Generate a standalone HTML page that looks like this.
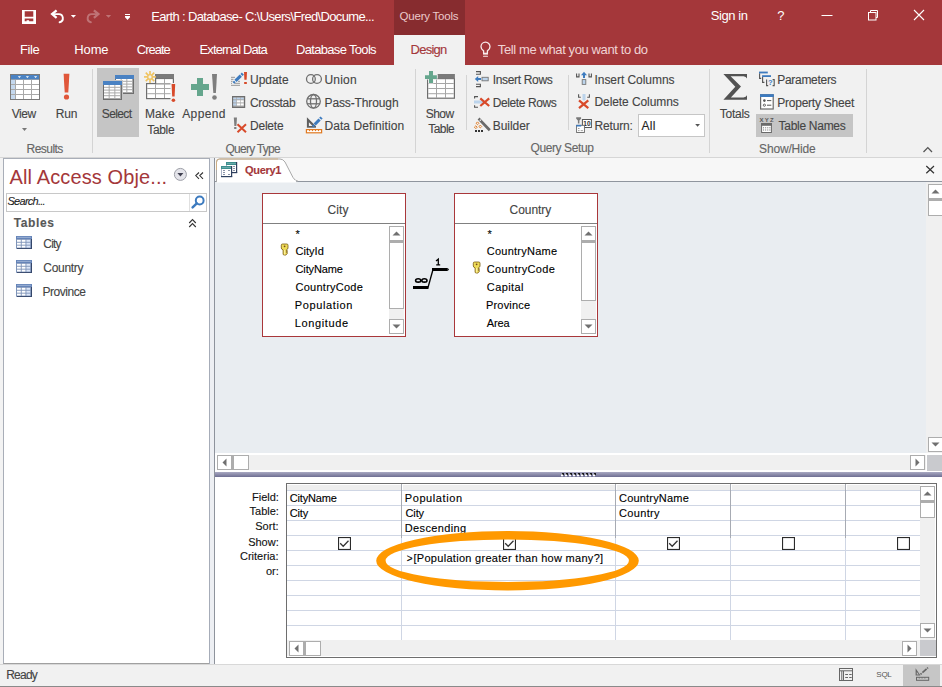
<!DOCTYPE html>
<html><head><meta charset="utf-8"><style>
html,body{margin:0;padding:0;width:942px;height:687px;overflow:hidden;background:#F1F1F1;}
.t{position:absolute;white-space:nowrap;font-family:"Liberation Sans",sans-serif;-webkit-text-stroke:0.12px currentColor;}
.r{position:absolute;}
svg.r{overflow:visible}
</style></head><body>
<div class="r" style="left:0px;top:0px;width:942px;height:65px;background:#A4373A;"></div>
<div class="r" style="left:394px;top:0px;width:71px;height:35px;background:#872C2F;"></div>
<div class="r" style="left:394px;top:35px;width:71px;height:30px;background:#F1F1F1;"></div>
<div class="r" style="left:0px;top:65px;width:942px;height:92px;background:#F1F1F1;"></div>
<div class="r" style="left:0px;top:157px;width:942px;height:1px;background:#D6D6D6;"></div>
<div class="r" style="left:0px;top:158px;width:942px;height:506px;background:#F3F3F3;"></div>
<div class="r" style="left:3px;top:158px;width:207px;height:506px;background:#FFFFFF;box-sizing:border-box;border:1px solid #A9AEB8;border-bottom-color:#A0A0A0"></div>
<div class="r" style="left:209px;top:158px;width:6px;height:506px;background:#EDEFF3;box-sizing:border-box;border-left:1px solid #A6ACB8;border-right:1px solid #8E939C"></div>
<div class="r" style="left:215px;top:158px;width:727px;height:23px;background:#F7F7F7;"></div>
<div class="r" style="left:215px;top:181px;width:727px;height:1px;background:#8F959E;"></div>
<div class="r" style="left:215px;top:182px;width:711px;height:271px;background:#E9EDF1;"></div>
<div class="r" style="left:926px;top:182px;width:16px;height:271px;background:#F0F0F0;"></div>
<div class="r" style="left:215px;top:453px;width:727px;height:19px;background:#FFFFFF;"></div>
<div class="r" style="left:217px;top:455px;width:709px;height:15px;background:#F0F0F0;"></div>
<div class="r" style="left:927px;top:455px;width:15px;height:16px;background:#C9CACE;"></div>
<div class="r" style="left:215px;top:472px;width:727px;height:5px;background:linear-gradient(#A9A9C2,#6F6F93);"></div>
<div class="r" style="left:215px;top:477px;width:727px;height:187px;background:#FFFFFF;"></div>
<svg class="r" style="left:0;top:0" width="942" height="687"><rect x="562" y="473" width="2" height="2" fill="#1A1A1A"/><rect x="561" y="474.5" width="2" height="1.8" fill="#FFFFFF"/><rect x="566" y="473" width="2" height="2" fill="#1A1A1A"/><rect x="565" y="474.5" width="2" height="1.8" fill="#FFFFFF"/><rect x="570" y="473" width="2" height="2" fill="#1A1A1A"/><rect x="569" y="474.5" width="2" height="1.8" fill="#FFFFFF"/><rect x="574" y="473" width="2" height="2" fill="#1A1A1A"/><rect x="573" y="474.5" width="2" height="1.8" fill="#FFFFFF"/><rect x="578" y="473" width="2" height="2" fill="#1A1A1A"/><rect x="577" y="474.5" width="2" height="1.8" fill="#FFFFFF"/><rect x="582" y="473" width="2" height="2" fill="#1A1A1A"/><rect x="581" y="474.5" width="2" height="1.8" fill="#FFFFFF"/><rect x="586" y="473" width="2" height="2" fill="#1A1A1A"/><rect x="585" y="474.5" width="2" height="1.8" fill="#FFFFFF"/><rect x="590" y="473" width="2" height="2" fill="#1A1A1A"/><rect x="589" y="474.5" width="2" height="1.8" fill="#FFFFFF"/><rect x="594" y="473" width="2" height="2" fill="#1A1A1A"/><rect x="593" y="474.5" width="2" height="1.8" fill="#FFFFFF"/></svg>
<div class="r" style="left:0px;top:664px;width:942px;height:1px;background:#D8D8D8;"></div>
<div class="r" style="left:0px;top:665px;width:942px;height:21px;background:#F1F1F1;"></div>
<div class="r" style="left:0px;top:686px;width:942px;height:1px;background:#8A8A8A;"></div>
<div class="r" style="left:903px;top:665px;width:37px;height:21px;background:#C6C6C6;"></div>
<div class="r" style="left:97px;top:68px;width:42px;height:69px;background:#C5C5C5;"></div>
<div class="r" style="left:756px;top:114px;width:97px;height:23px;background:#C5C5C5;"></div>
<div class="r" style="left:638px;top:114px;width:67px;height:23px;background:#FFFFFF;box-sizing:border-box;border:1px solid #C6C6C6"></div>
<div class="r" style="left:92px;top:69px;width:1px;height:84px;background:#D4D4D4;"></div>
<div class="r" style="left:415px;top:69px;width:1px;height:84px;background:#D4D4D4;"></div>
<div class="r" style="left:709px;top:69px;width:1px;height:84px;background:#D4D4D4;"></div>
<div class="r" style="left:866px;top:69px;width:1px;height:84px;background:#D4D4D4;"></div>
<div class="r" style="left:466px;top:75px;width:1px;height:55px;background:#D4D4D4;"></div>
<div class="r" style="left:568px;top:75px;width:1px;height:55px;background:#D4D4D4;"></div>
<div class="r" style="left:6px;top:193px;width:201px;height:19px;background:#FFFFFF;box-sizing:border-box;border:1px solid #C8C8C8"></div>
<div class="r" style="left:189px;top:194px;width:1px;height:17px;background:#E0E0E0;"></div>
<div class="r" style="left:262px;top:193px;width:144px;height:144px;background:#FFFFFF;box-sizing:border-box;border:1px solid #A9373A"></div>
<div class="r" style="left:263px;top:223px;width:142px;height:1px;background:#808080;"></div>
<div class="r" style="left:389px;top:226px;width:15px;height:15px;background:#FFFFFF;box-sizing:border-box;border:1px solid #ADADAD"></div>
<div class="r" style="left:389px;top:241px;width:15px;height:68px;background:#FFFFFF;box-sizing:border-box;border:1px solid #ADADAD;border-top-width:2px"></div>
<div class="r" style="left:389px;top:309px;width:15px;height:10px;background:#F0F0F0;"></div>
<div class="r" style="left:389px;top:319px;width:15px;height:15px;background:#FFFFFF;box-sizing:border-box;border:1px solid #ADADAD"></div>
<svg class="r" style="left:389px;top:226px" width="15" height="15"><path d="M3.5 9.5 L7.5 5.5 L11.5 9.5Z" fill="#707070"/></svg>
<svg class="r" style="left:389px;top:319px" width="15" height="15"><path d="M3.5 5.5 L7.5 9.5 L11.5 5.5Z" fill="#707070"/></svg>
<div class="r" style="left:454px;top:193px;width:144px;height:144px;background:#FFFFFF;box-sizing:border-box;border:1px solid #A9373A"></div>
<div class="r" style="left:455px;top:223px;width:142px;height:1px;background:#808080;"></div>
<div class="r" style="left:581px;top:226px;width:15px;height:15px;background:#FFFFFF;box-sizing:border-box;border:1px solid #ADADAD"></div>
<div class="r" style="left:581px;top:241px;width:15px;height:60px;background:#FFFFFF;box-sizing:border-box;border:1px solid #ADADAD;border-top-width:2px"></div>
<div class="r" style="left:581px;top:301px;width:15px;height:18px;background:#F0F0F0;"></div>
<div class="r" style="left:581px;top:319px;width:15px;height:15px;background:#FFFFFF;box-sizing:border-box;border:1px solid #ADADAD"></div>
<svg class="r" style="left:581px;top:226px" width="15" height="15"><path d="M3.5 9.5 L7.5 5.5 L11.5 9.5Z" fill="#707070"/></svg>
<svg class="r" style="left:581px;top:319px" width="15" height="15"><path d="M3.5 5.5 L7.5 9.5 L11.5 5.5Z" fill="#707070"/></svg>
<div class="r" style="left:286px;top:483px;width:651px;height:175px;background:#FFFFFF;box-sizing:border-box;border:1px solid #6E6E6E"></div>
<div class="r" style="left:287px;top:485px;width:114px;height:5px;background:#EEEEEE;"></div>
<div class="r" style="left:403px;top:485px;width:212px;height:5px;background:#EEEEEE;"></div>
<div class="r" style="left:617px;top:485px;width:113px;height:5px;background:#EEEEEE;"></div>
<div class="r" style="left:732px;top:485px;width:113px;height:5px;background:#EEEEEE;"></div>
<div class="r" style="left:847px;top:485px;width:73px;height:5px;background:#EEEEEE;"></div>
<div class="r" style="left:287px;top:490px;width:633px;height:1px;background:#CFD6E4;"></div>
<div class="r" style="left:287px;top:505px;width:633px;height:1px;background:#CFD6E4;"></div>
<div class="r" style="left:287px;top:520px;width:633px;height:1px;background:#CFD6E4;"></div>
<div class="r" style="left:287px;top:535px;width:633px;height:1px;background:#CFD6E4;"></div>
<div class="r" style="left:287px;top:550px;width:633px;height:1px;background:#CFD6E4;"></div>
<div class="r" style="left:287px;top:565px;width:633px;height:1px;background:#CFD6E4;"></div>
<div class="r" style="left:287px;top:580px;width:633px;height:1px;background:#CFD6E4;"></div>
<div class="r" style="left:287px;top:595px;width:633px;height:1px;background:#CFD6E4;"></div>
<div class="r" style="left:287px;top:610px;width:633px;height:1px;background:#CFD6E4;"></div>
<div class="r" style="left:287px;top:625px;width:633px;height:1px;background:#CFD6E4;"></div>
<div class="r" style="left:401px;top:484px;width:1px;height:54px;background:#A7ABB3;"></div>
<div class="r" style="left:401px;top:538px;width:1px;height:102px;background:#CFD6E4;"></div>
<div class="r" style="left:615px;top:484px;width:1px;height:54px;background:#A7ABB3;"></div>
<div class="r" style="left:615px;top:538px;width:1px;height:102px;background:#CFD6E4;"></div>
<div class="r" style="left:730px;top:484px;width:1px;height:54px;background:#A7ABB3;"></div>
<div class="r" style="left:730px;top:538px;width:1px;height:102px;background:#CFD6E4;"></div>
<div class="r" style="left:845px;top:484px;width:1px;height:54px;background:#A7ABB3;"></div>
<div class="r" style="left:845px;top:538px;width:1px;height:102px;background:#CFD6E4;"></div>
<svg class="r" style="left:338px;top:537px" width="13" height="13"><rect x="0.55" y="0.55" width="11.9" height="11.9" fill="#fff" stroke="#2B2B2B" stroke-width="1.1"/><path d="M2.2 6.2 L5.2 9.3 L10.5 3.7" fill="none" stroke="#333" stroke-width="1.25"/></svg>
<svg class="r" style="left:503px;top:537px" width="13" height="13"><rect x="0.55" y="0.55" width="11.9" height="11.9" fill="#fff" stroke="#2B2B2B" stroke-width="1.1"/><path d="M2.2 6.2 L5.2 9.3 L10.5 3.7" fill="none" stroke="#333" stroke-width="1.25"/></svg>
<svg class="r" style="left:667px;top:537px" width="13" height="13"><rect x="0.55" y="0.55" width="11.9" height="11.9" fill="#fff" stroke="#2B2B2B" stroke-width="1.1"/><path d="M2.2 6.2 L5.2 9.3 L10.5 3.7" fill="none" stroke="#333" stroke-width="1.25"/></svg>
<svg class="r" style="left:782px;top:537px" width="13" height="13"><rect x="0.55" y="0.55" width="11.9" height="11.9" fill="#fff" stroke="#2B2B2B" stroke-width="1.1"/></svg>
<svg class="r" style="left:897px;top:537px" width="13" height="13"><rect x="0.55" y="0.55" width="11.9" height="11.9" fill="#fff" stroke="#2B2B2B" stroke-width="1.1"/></svg>
<div class="r" style="left:920px;top:486px;width:15px;height:154px;background:#F0F0F0;"></div>
<div class="r" style="left:920px;top:486px;width:15px;height:15px;background:#FFFFFF;box-sizing:border-box;border:1px solid #ADADAD"></div>
<div class="r" style="left:920px;top:501px;width:15px;height:17px;background:#FFFFFF;box-sizing:border-box;border:1px solid #ADADAD;border-top-width:2px"></div>
<div class="r" style="left:920px;top:623px;width:15px;height:15px;background:#FFFFFF;box-sizing:border-box;border:1px solid #ADADAD"></div>
<svg class="r" style="left:920px;top:486px" width="15" height="15"><path d="M3.5 9.5 L7.5 5.5 L11.5 9.5Z" fill="#707070"/></svg>
<svg class="r" style="left:920px;top:623px" width="15" height="15"><path d="M3.5 5.5 L7.5 9.5 L11.5 5.5Z" fill="#707070"/></svg>
<div class="r" style="left:287px;top:640px;width:633px;height:16px;background:#F0F0F0;"></div>
<div class="r" style="left:920px;top:640px;width:16px;height:16px;background:#C9CACE;"></div>
<div class="r" style="left:289px;top:641px;width:15px;height:15px;background:#FFFFFF;box-sizing:border-box;border:1px solid #ADADAD"></div>
<div class="r" style="left:304px;top:641px;width:17px;height:15px;background:#FFFFFF;box-sizing:border-box;border:1px solid #ADADAD;border-left-width:2px"></div>
<div class="r" style="left:902px;top:641px;width:15px;height:15px;background:#FFFFFF;box-sizing:border-box;border:1px solid #ADADAD"></div>
<svg class="r" style="left:289px;top:641px" width="15" height="15"><path d="M9.5 3.5 L5.5 7.5 L9.5 11.5Z" fill="#707070"/></svg>
<svg class="r" style="left:902px;top:641px" width="15" height="15"><path d="M5.5 3.5 L9.5 7.5 L5.5 11.5Z" fill="#707070"/></svg>
<div class="r" style="left:217px;top:455px;width:15px;height:15px;background:#FFFFFF;box-sizing:border-box;border:1px solid #ADADAD"></div>
<div class="r" style="left:232px;top:455px;width:17px;height:15px;background:#FFFFFF;box-sizing:border-box;border:1px solid #ADADAD;border-left-width:2px"></div>
<div class="r" style="left:910px;top:455px;width:15px;height:15px;background:#FFFFFF;box-sizing:border-box;border:1px solid #ADADAD"></div>
<svg class="r" style="left:217px;top:455px" width="15" height="15"><path d="M9.5 3.5 L5.5 7.5 L9.5 11.5Z" fill="#707070"/></svg>
<svg class="r" style="left:910px;top:455px" width="15" height="15"><path d="M5.5 3.5 L9.5 7.5 L5.5 11.5Z" fill="#707070"/></svg>
<div class="r" style="left:928px;top:184px;width:14px;height:15px;background:#FFFFFF;box-sizing:border-box;border:1px solid #ADADAD;border-right:none"></div>
<div class="r" style="left:928px;top:199px;width:14px;height:17px;background:#FFFFFF;box-sizing:border-box;border:1px solid #ADADAD;border-top-width:2px;border-right:none"></div>
<div class="r" style="left:928px;top:437px;width:14px;height:15px;background:#FFFFFF;box-sizing:border-box;border:1px solid #ADADAD;border-right:none"></div>
<svg class="r" style="left:928px;top:184px" width="15" height="15"><path d="M3.5 9.5 L7.5 5.5 L11.5 9.5Z" fill="#707070"/></svg>
<svg class="r" style="left:928px;top:437px" width="15" height="15"><path d="M3.5 5.5 L7.5 9.5 L11.5 5.5Z" fill="#707070"/></svg>
<svg class="r" style="left:0;top:0" width="942" height="687" viewBox="0 0 942 687"><path d="M22 10h14v14h-14z M24.7 11.3h8.6v5.5h-8.6z M24.7 18.4h8.6v2.9h-4.2v-1h-2.5v1h-1.9z" fill="#FFFFFF" fill-rule="evenodd"/><path d="M56.6 10.3 L52.1 14.1 L56.6 17.9" fill="none" stroke="#FFFFFF" stroke-width="2.3"/><path d="M52.8 14.1 H58.5 A4.1 4.1 0 0 1 59.6 22.2" fill="none" stroke="#FFFFFF" stroke-width="1.9" stroke-linecap="round"/><path d="M70.8 15 H76 L73.4 17.8Z" fill="#FFFFFF"/><g opacity="0.3" transform="matrix(-1,0,0,1,150.5,0)"><path d="M56.6 10.3 L52.1 14.1 L56.6 17.9" fill="none" stroke="#FFFFFF" stroke-width="2.3"/><path d="M52.8 14.1 H58.5 A4.1 4.1 0 0 1 59.6 22.2" fill="none" stroke="#FFFFFF" stroke-width="1.9" stroke-linecap="round"/></g><path d="M105.8 15 H111.2 L108.5 17.8Z" fill="#FFFFFF" opacity="0.3"/><rect x="125" y="14" width="5" height="1" fill="#fff"/><rect x="125" y="16" width="5" height="1" fill="#fff"/><path d="M124.8 17 H130.2 L127.5 20Z" fill="#fff"/><rect x="821.5" y="15" width="11" height="1" fill="#fff"/><rect x="868.5" y="12.5" width="7.5" height="7.5" fill="none" stroke="#fff" stroke-width="1"/><path d="M870.5 12.5 V10.5 H877.5 V17.5 H876" fill="none" stroke="#fff" stroke-width="1"/><path d="M914 10 L924 20 M924 10 L914 20" stroke="#fff" stroke-width="1.1"/><g transform="translate(0,0.7)"><path d="M483.6 52.3 V50.2 C481.9 49 481 47.6 481 46 A4.5 4.5 0 0 1 490 46 C490 47.6 489.1 49 487.4 50.2 V52.3" fill="none" stroke="#F8ECEC" stroke-width="1.3"/><rect x="483" y="52" width="5" height="1.9" fill="#F8ECEC"/><rect x="483" y="55" width="5" height="1.1" rx="0.5" fill="#F8ECEC"/></g><rect x="10" y="74" width="30" height="26" fill="#A9A9A9"/><rect x="10.5" y="74.5" width="29" height="25" fill="none" stroke="#7A7A7A" stroke-width="1"/><rect x="11" y="75" width="28" height="4.3" fill="#4A82C3"/><path d="M17.799999999999997 76.2 H21.0 L19.4 78Z" fill="#fff"/><path d="M25.799999999999997 76.2 H29.0 L27.4 78Z" fill="#fff"/><path d="M34.0 76.2 H37.2 L35.6 78Z" fill="#fff"/><rect x="11" y="80" width="4" height="4" fill="#C4D8EE"/><rect x="16" y="80" width="7" height="4" fill="#FFFFFF"/><rect x="24" y="80" width="7" height="4" fill="#FFFFFF"/><rect x="32" y="80" width="7" height="4" fill="#FFFFFF"/><rect x="11" y="85" width="4" height="4" fill="#C4D8EE"/><rect x="16" y="85" width="7" height="4" fill="#FFFFFF"/><rect x="24" y="85" width="7" height="4" fill="#FFFFFF"/><rect x="32" y="85" width="7" height="4" fill="#FFFFFF"/><rect x="11" y="90" width="4" height="4" fill="#C4D8EE"/><rect x="16" y="90" width="7" height="4" fill="#FFFFFF"/><rect x="24" y="90" width="7" height="4" fill="#FFFFFF"/><rect x="32" y="90" width="7" height="4" fill="#FFFFFF"/><rect x="11" y="95" width="4" height="4" fill="#C4D8EE"/><rect x="16" y="95" width="7" height="4" fill="#FFFFFF"/><rect x="24" y="95" width="7" height="4" fill="#FFFFFF"/><rect x="32" y="95" width="7" height="4" fill="#FFFFFF"/><path d="M22 128 H27 L24.5 131Z" fill="#777"/><path d="M63.6 73.7 H69.4 L68.3 92.5 H64.7Z" fill="#E0573A"/><circle cx="66.5" cy="97" r="2.6" fill="#E0573A"/><rect x="115" y="75" width="19" height="19" fill="#6E6E6E"/><rect x="115" y="75" width="19" height="4" fill="#4A82C3"/><rect x="116" y="79" width="17" height="14" fill="#A9A9A9"/><rect x="116.00" y="79.00" width="4.67" height="1.80" fill="#fff"/><rect x="116.00" y="81.80" width="4.67" height="1.80" fill="#fff"/><rect x="116.00" y="84.60" width="4.67" height="1.80" fill="#fff"/><rect x="116.00" y="87.40" width="4.67" height="1.80" fill="#fff"/><rect x="116.00" y="90.20" width="4.67" height="1.80" fill="#fff"/><rect x="121.67" y="79.00" width="4.67" height="1.80" fill="#fff"/><rect x="121.67" y="81.80" width="4.67" height="1.80" fill="#fff"/><rect x="121.67" y="84.60" width="4.67" height="1.80" fill="#fff"/><rect x="121.67" y="87.40" width="4.67" height="1.80" fill="#fff"/><rect x="121.67" y="90.20" width="4.67" height="1.80" fill="#fff"/><rect x="127.33" y="79.00" width="4.67" height="1.80" fill="#fff"/><rect x="127.33" y="81.80" width="4.67" height="1.80" fill="#fff"/><rect x="127.33" y="84.60" width="4.67" height="1.80" fill="#fff"/><rect x="127.33" y="87.40" width="4.67" height="1.80" fill="#fff"/><rect x="127.33" y="90.20" width="4.67" height="1.80" fill="#fff"/><rect x="102" y="80" width="21" height="21" fill="#C5C5C5"/><rect x="103" y="81" width="19" height="19" fill="#6E6E6E"/><rect x="103" y="81" width="19" height="4" fill="#4A82C3"/><rect x="104" y="85" width="17" height="14" fill="#A9A9A9"/><rect x="104.00" y="85.00" width="4.67" height="1.80" fill="#fff"/><rect x="104.00" y="87.80" width="4.67" height="1.80" fill="#fff"/><rect x="104.00" y="90.60" width="4.67" height="1.80" fill="#fff"/><rect x="104.00" y="93.40" width="4.67" height="1.80" fill="#fff"/><rect x="104.00" y="96.20" width="4.67" height="1.80" fill="#fff"/><rect x="109.67" y="85.00" width="4.67" height="1.80" fill="#fff"/><rect x="109.67" y="87.80" width="4.67" height="1.80" fill="#fff"/><rect x="109.67" y="90.60" width="4.67" height="1.80" fill="#fff"/><rect x="109.67" y="93.40" width="4.67" height="1.80" fill="#fff"/><rect x="109.67" y="96.20" width="4.67" height="1.80" fill="#fff"/><rect x="115.33" y="85.00" width="4.67" height="1.80" fill="#fff"/><rect x="115.33" y="87.80" width="4.67" height="1.80" fill="#fff"/><rect x="115.33" y="90.60" width="4.67" height="1.80" fill="#fff"/><rect x="115.33" y="93.40" width="4.67" height="1.80" fill="#fff"/><rect x="115.33" y="96.20" width="4.67" height="1.80" fill="#fff"/><rect x="146.6" y="83.6" width="26.8" height="15" fill="#fff" stroke="#6E6E6E" stroke-width="1.2"/><rect x="155.6" y="78.5" width="17.8" height="5.1" fill="#fff" stroke="#6E6E6E" stroke-width="1.2"/><rect x="155" y="74" width="19" height="4.6" fill="#7A7A7A"/><g fill="#A6A6A6"><rect x="147.2" y="88" width="25.6" height="1"/><rect x="147.2" y="93.2" width="25.6" height="1"/><rect x="164" y="79" width="1" height="19"/><rect x="155" y="84.2" width="1" height="14"/><rect x="156.2" y="83" width="17" height="1"/></g><g stroke="#F0C35E" stroke-width="1.6"><line x1="152.60" y1="76.90" x2="156.00" y2="76.90"/><line x1="151.84" y1="78.74" x2="154.24" y2="81.14"/><line x1="150.00" y1="79.50" x2="150.00" y2="82.90"/><line x1="148.16" y1="78.74" x2="145.76" y2="81.14"/><line x1="147.40" y1="76.90" x2="144.00" y2="76.90"/><line x1="148.16" y1="75.06" x2="145.76" y2="72.66"/><line x1="150.00" y1="74.30" x2="150.00" y2="70.90"/><line x1="151.84" y1="75.06" x2="154.24" y2="72.66"/></g><circle cx="150" cy="76.9" r="2.3" fill="#F1F1F1" stroke="#F0C35E" stroke-width="1.4"/><rect x="170.5" y="83" width="6" height="20" fill="#F1F1F1"/><path d="M171.6 84 H175.2 L174.6 96.5 H172.2Z" fill="#D84A2A"/><circle cx="173.4" cy="100.2" r="1.8" fill="#D84A2A"/><path d="M197 78 H203 V84 H209 V90 H203 V96 H197 V90 H191 V84 H197Z" fill="#65A68D"/><path d="M212 74 H217 L215.9 93 H213.3Z" fill="#7E7E7E"/><circle cx="214.5" cy="97.5" r="2.3" fill="#7E7E7E"/><g fill="#A6A6A6"><rect x="231" y="76.8" width="4" height="1.2"/><rect x="231" y="78.8" width="2.5" height="1.2"/><rect x="231" y="80.8" width="1.5" height="1.2"/><rect x="238" y="80.8" width="2" height="1.2"/><rect x="231" y="82.8" width="1" height="1.2"/><rect x="234.5" y="82.8" width="5.5" height="1.2"/><rect x="231" y="84.8" width="9" height="1.2"/></g><rect x="233" y="73" width="8" height="10" fill="#F1F1F1" transform="rotate(45 237.5 78)" opacity="0"/><line x1="233.40" y1="82.90" x2="234.83" y2="81.50" stroke="#3D7BBF" stroke-width="2.33" stroke-linecap="butt"/><line x1="235.47" y1="80.87" x2="240.83" y2="75.63" stroke="#3D7BBF" stroke-width="3.10" stroke-linecap="butt"/><line x1="241.47" y1="75.00" x2="242.90" y2="73.60" stroke="#3D7BBF" stroke-width="2.94" stroke-linecap="butt"/><path d="M244 72 H247 L246.6 79.8 H244.4Z" fill="#D84A2A"/><rect x="244" y="82" width="3" height="2" rx="0.8" fill="#D84A2A"/><rect x="232" y="96" width="13.2" height="12" fill="#6E6E6E"/><rect x="233.2" y="97.2" width="10.8" height="9.6" fill="#A9A9A9"/><rect x="233.2" y="97.7" width="3.1" height="1.6" fill="#B8D0EA"/><rect x="236.9" y="97.7" width="3.1" height="1.6" fill="#B8D0EA"/><rect x="240.6" y="97.7" width="3.1" height="1.6" fill="#B8D0EA"/><rect x="233.2" y="100.3" width="3.1" height="2.1" fill="#B8D0EA"/><rect x="236.9" y="100.3" width="3.1" height="2.1" fill="#FFFFFF"/><rect x="240.6" y="100.3" width="3.1" height="2.1" fill="#FFFFFF"/><rect x="233.2" y="103.4" width="3.1" height="2.1" fill="#B8D0EA"/><rect x="236.9" y="103.4" width="3.1" height="2.1" fill="#FFFFFF"/><rect x="240.6" y="103.4" width="3.1" height="2.1" fill="#FFFFFF"/><rect x="233.2" y="99.8" width="10.8" height="0.1" fill="#A9A9A9"/><path d="M233.8 117.4 H237 L236.4 126 H234.4Z" fill="#7E7E7E"/><rect x="234" y="127" width="2.6" height="2" rx="0.8" fill="#7E7E7E"/><path d="M237.5 124.3 L246 132.2 M246 124.3 L237.5 132.2" stroke="#D84A2A" stroke-width="2"/><circle cx="310.9" cy="79" r="4.4" fill="none" stroke="#707070" stroke-width="1.3"/><circle cx="317" cy="79" r="4.4" fill="none" stroke="#707070" stroke-width="1.3"/><g fill="none" stroke="#707070" stroke-width="1.3"><circle cx="313.5" cy="101.3" r="6.8"/><ellipse cx="313.5" cy="101.3" rx="3" ry="6.8"/><line x1="307" y1="98.8" x2="320" y2="98.8"/><line x1="307" y1="103.8" x2="320" y2="103.8"/></g><path d="M306.9 117.3 L316 126.3 V127.9 H306.9Z M308.9 122.2 V125.9 H312.6Z" fill="#5E5E5E" fill-rule="evenodd"/><rect x="306.9" y="127.7" width="12" height="1.6" fill="#F1F1F1"/><line x1="312.70" y1="126.60" x2="314.09" y2="125.16" stroke="#3D7BBF" stroke-width="2.33" stroke-linecap="butt"/><line x1="314.72" y1="124.52" x2="319.58" y2="119.48" stroke="#3D7BBF" stroke-width="3.10" stroke-linecap="butt"/><line x1="320.21" y1="118.84" x2="321.60" y2="117.40" stroke="#3D7BBF" stroke-width="2.94" stroke-linecap="butt"/><rect x="306.4" y="129.6" width="15.2" height="3.2" fill="#fff" stroke="#E07A22" stroke-width="1.2"/><g fill="#E07A22"><rect x="309.0" y="129.8" width="1" height="1.3"/><rect x="312.0" y="129.8" width="1" height="1.3"/><rect x="315.0" y="129.8" width="1" height="1.3"/><rect x="318.0" y="129.8" width="1" height="1.3"/></g><rect x="427.6" y="78.6" width="26.8" height="19.6" fill="#fff" stroke="#6E6E6E" stroke-width="1.2"/><rect x="437.5" y="74" width="17.4" height="4.8" fill="#7A7A7A"/><g fill="#A6A6A6"><rect x="428.2" y="83" width="25.6" height="1"/><rect x="428.2" y="88" width="25.6" height="1"/><rect x="428.2" y="93.2" width="25.6" height="1"/><rect x="436" y="79" width="1" height="19"/><rect x="445" y="79" width="1" height="19"/></g><path d="M429 71 H433 V75.2 H436.9 V78.9 H433 V83 H429 V78.9 H425 V75.2 H429Z" fill="#65A68D" stroke="#F1F1F1" stroke-width="1.2" paint-order="stroke"/><g fill="none" stroke="#555" stroke-width="1.1"><path d="M476 71.6 H480.4 V74.2 H476"/><path d="M476 84.2 H480.4 V86.6 H476"/></g><rect x="482" y="77.3" width="6.2" height="3.5" fill="#BCD4EC" stroke="#777" stroke-width="0.9"/><path d="M481 79 H476.5" stroke="#3D7BBF" stroke-width="2"/><path d="M474.8 79 L478.2 76 L478.2 82Z" fill="#3D7BBF"/><g fill="none" stroke="#555" stroke-width="1.1"><path d="M478 96.6 H474.6 V98.6"/><path d="M478 107.2 H474.6 V105.2"/></g><path d="M474 100.4 H483 L485 102 L483 103.6 H474Z" fill="#BCD4EC"/><path d="M480.3 98.3 L489.2 106 M489.2 98.3 L480.3 106" stroke="#D84A2A" stroke-width="2.2"/><path d="M479.6 119.6 L488.8 129.2" stroke="#6A6A6A" stroke-width="2.8" stroke-linecap="square"/><rect x="479.7" y="119.5" width="1.3" height="1.3" fill="#fff" transform="rotate(45 480.3 120.1)"/><g fill="none" stroke="#E07A22" stroke-width="0.9"><rect x="476.5" y="122.3" width="2" height="2" transform="rotate(45 477.5 123.3)"/><rect x="474.8" y="126.2" width="2" height="2" transform="rotate(45 475.8 127.2)"/><rect x="479.3" y="125.5" width="2" height="2" transform="rotate(45 480.3 126.5)"/></g><g fill="#333"><rect x="475" y="130" width="2" height="2"/><rect x="478" y="130" width="2" height="2"/><rect x="481" y="130" width="2" height="2"/></g><g fill="none" stroke="#555" stroke-width="1.1"><path d="M576.6 73.4 V76.9 H579 V73.4"/><path d="M589 73.4 V76.9 H591.4 V73.4"/></g><rect x="582.2" y="79.6" width="3.6" height="4.8" fill="#BCD4EC" stroke="#777" stroke-width="0.9"/><path d="M584 78 V74" stroke="#3D7BBF" stroke-width="2"/><path d="M581 75.3 L584 71.8 L587 75.3Z" fill="#3D7BBF"/><g fill="none" stroke="#555" stroke-width="1.1"><path d="M578.6 94.2 V97.3 H580.8"/><path d="M589.4 94.2 V97.3 H587.2"/></g><path d="M582.5 94 H585.5 V99.5 L584 101 L582.5 99.5Z" fill="#BCD4EC"/><path d="M579 100.3 L588.3 108.2 M588.3 100.3 L579 108.2" stroke="#D84A2A" stroke-width="2.2"/><path d="M576.2 117.3 H581.1 V118.8 L579.4 120.6 V123.4 H577.9 V120.6 L576.2 118.8Z" fill="#7A7A7A"/><rect x="582.4" y="119.5" width="9" height="8" fill="#fff" stroke="#555" stroke-width="1"/><text x="586.9" y="126.2" font-family="Liberation Sans" font-size="6.5" font-weight="bold" text-anchor="middle" fill="#333">10</text><rect x="576.6" y="125.3" width="7.8" height="7.2" fill="#fff" stroke="#666" stroke-width="0.9"/><rect x="576.2" y="124.9" width="5" height="1.6" fill="#3D7BBF"/><g fill="#888"><rect x="578" y="128" width="1.5" height="0.8"/><rect x="578" y="130.3" width="1.5" height="0.8"/><rect x="580.7" y="130.3" width="2.2" height="0.8"/></g><path d="M695.2 124 H700 L697.6 126.8Z" fill="#555"/><path d="M723.4 74 H747 V78.4 Q746.2 76.4 743.5 76.2 H730.6 L741 86.6 L730.9 97.5 H743.5 Q746.2 97.3 747 95.2 V99.7 H723.4 L735.3 86.8 Z" fill="#525252"/><g fill="none" stroke="#555" stroke-width="1.1"><path d="M759.6 73.2 V78.4 H761.2"/><path d="M762.6 76.8 V82.4 H764.4"/><path d="M766.6 79.6 V85.6 H768.2"/><path d="M772.6 79.6 H774.2 V85.6 H772.6"/></g><rect x="759" y="71.6" width="8.8" height="1.8" fill="#3D7BBF"/><rect x="762.1" y="75.2" width="8.9" height="1.8" fill="#3D7BBF"/><text x="770.4" y="85.2" font-family="Liberation Sans" font-size="7.5" font-weight="bold" text-anchor="middle" fill="#3D7BBF">?</text><rect x="760.6" y="94.8" width="12.6" height="14.2" fill="#fff" stroke="#6A6A6A" stroke-width="1.2"/><rect x="760" y="94.2" width="13.8" height="2.8" fill="#3D7BBF"/><circle cx="764.4" cy="100.6" r="1.3" fill="#555"/><circle cx="764.4" cy="105.2" r="1.1" fill="none" stroke="#555" stroke-width="0.9"/><rect x="767" y="100.1" width="4.3" height="1" fill="#555"/><rect x="767" y="104.7" width="4.3" height="1" fill="#555"/><text x="767.2" y="121.6" font-family="Liberation Sans" font-size="6" font-weight="bold" text-anchor="middle" fill="#555" letter-spacing="1.3">XYZ</text><rect x="761.6" y="123.5" width="9.8" height="9" fill="#fff" stroke="#6A6A6A" stroke-width="1"/><rect x="761.1" y="123" width="10.8" height="2.8" fill="#6A6A6A"/><g fill="#777"><rect x="763.0" y="127.3" width="1" height="1"/><rect x="763.0" y="129.5" width="1" height="1"/><rect x="764.9" y="127.3" width="1" height="1"/><rect x="764.9" y="129.5" width="1" height="1"/><rect x="766.8" y="127.3" width="1" height="1"/><rect x="766.8" y="129.5" width="1" height="1"/><rect x="768.7" y="127.3" width="1" height="1"/><rect x="768.7" y="129.5" width="1" height="1"/><rect x="770.6" y="127.3" width="1" height="1"/><rect x="770.6" y="129.5" width="1" height="1"/></g><path d="M923.5 152 L927.8 147.6 L932 152" fill="none" stroke="#555" stroke-width="1.3"/><circle cx="180.4" cy="174.4" r="6" fill="#E4E4EA" stroke="#9EA0A8" stroke-width="1"/><path d="M177.4 173 H183.4 L180.4 176.6Z" fill="#3F4050"/><path d="M199 172.5 L195.8 175.6 L199 178.8 M203 172.5 L199.8 175.6 L203 178.8" fill="none" stroke="#333" stroke-width="1.1"/><circle cx="199.7" cy="200.5" r="3.9" fill="none" stroke="#3D7BBF" stroke-width="2"/><path d="M196.8 203.4 L192.6 207.3" stroke="#3D7BBF" stroke-width="2.5" stroke-linecap="round"/><path d="M189.2 223 L192.5 219.5 L195.8 223 M189.2 227 L192.5 223.5 L195.8 227" fill="none" stroke="#333" stroke-width="1.1"/><rect x="16" y="236" width="16" height="12.8" fill="#7D93B8"/><rect x="16" y="236" width="16" height="3" fill="#6584B8"/><rect x="17" y="236.8" width="13.8" height="1.2" fill="#93AAD0"/><rect x="17.0" y="239.8" width="3.8" height="2" fill="#FFFFFF"/><rect x="17.0" y="242.7" width="3.8" height="2" fill="#FFFFFF"/><rect x="17.0" y="245.6" width="3.8" height="2" fill="#FFFFFF"/><rect x="21.7" y="239.8" width="3.8" height="2" fill="#FFFFFF"/><rect x="21.7" y="242.7" width="3.8" height="2" fill="#FFFFFF"/><rect x="21.7" y="245.6" width="3.8" height="2" fill="#FFFFFF"/><rect x="26.4" y="239.8" width="3.8" height="2" fill="#DCE6F8"/><rect x="26.4" y="242.7" width="3.8" height="2" fill="#DCE6F8"/><rect x="26.4" y="245.6" width="3.8" height="2" fill="#DCE6F8"/><rect x="31" y="239" width="1" height="9.8" fill="#34466A"/><rect x="17" y="248" width="15" height="0.9" fill="#34466A"/><rect x="16" y="260" width="16" height="12.8" fill="#7D93B8"/><rect x="16" y="260" width="16" height="3" fill="#6584B8"/><rect x="17" y="260.8" width="13.8" height="1.2" fill="#93AAD0"/><rect x="17.0" y="263.8" width="3.8" height="2" fill="#FFFFFF"/><rect x="17.0" y="266.7" width="3.8" height="2" fill="#FFFFFF"/><rect x="17.0" y="269.6" width="3.8" height="2" fill="#FFFFFF"/><rect x="21.7" y="263.8" width="3.8" height="2" fill="#FFFFFF"/><rect x="21.7" y="266.7" width="3.8" height="2" fill="#FFFFFF"/><rect x="21.7" y="269.6" width="3.8" height="2" fill="#FFFFFF"/><rect x="26.4" y="263.8" width="3.8" height="2" fill="#DCE6F8"/><rect x="26.4" y="266.7" width="3.8" height="2" fill="#DCE6F8"/><rect x="26.4" y="269.6" width="3.8" height="2" fill="#DCE6F8"/><rect x="31" y="263" width="1" height="9.8" fill="#34466A"/><rect x="17" y="272" width="15" height="0.9" fill="#34466A"/><rect x="16" y="284" width="16" height="12.8" fill="#7D93B8"/><rect x="16" y="284" width="16" height="3" fill="#6584B8"/><rect x="17" y="284.8" width="13.8" height="1.2" fill="#93AAD0"/><rect x="17.0" y="287.8" width="3.8" height="2" fill="#FFFFFF"/><rect x="17.0" y="290.7" width="3.8" height="2" fill="#FFFFFF"/><rect x="17.0" y="293.6" width="3.8" height="2" fill="#FFFFFF"/><rect x="21.7" y="287.8" width="3.8" height="2" fill="#FFFFFF"/><rect x="21.7" y="290.7" width="3.8" height="2" fill="#FFFFFF"/><rect x="21.7" y="293.6" width="3.8" height="2" fill="#FFFFFF"/><rect x="26.4" y="287.8" width="3.8" height="2" fill="#DCE6F8"/><rect x="26.4" y="290.7" width="3.8" height="2" fill="#DCE6F8"/><rect x="26.4" y="293.6" width="3.8" height="2" fill="#DCE6F8"/><rect x="31" y="287" width="1" height="9.8" fill="#34466A"/><rect x="17" y="296" width="15" height="0.9" fill="#34466A"/><path d="M216.5 182 V162 Q216.5 159 219.5 159 H280 Q283 159 285 162 L293 177.5 Q295 181 298 181.2" fill="#FFFFFF" stroke="#A9A9A9" stroke-width="1"/><path d="M216.5 170 V162 Q216.5 159 219.5 159 H278" fill="none" stroke="#CDAE85" stroke-width="1"/><rect x="217" y="180.5" width="79" height="2" fill="#FFFFFF"/><rect x="226" y="162" width="11" height="11" fill="#FFFFFF"/><rect x="226" y="162" width="1" height="11" fill="#A9B3C6"/><rect x="226" y="162" width="11" height="3" fill="#3E8E8E"/><rect x="227" y="163" width="9" height="1" fill="#66AAAA"/><rect x="236" y="162" width="1.2" height="11" fill="#2E405E"/><rect x="226" y="172" width="11.2" height="1.2" fill="#2E405E"/><rect x="233" y="166" width="2" height="1" fill="#8A94A8"/><rect x="233" y="168" width="2" height="1" fill="#8A94A8"/><rect x="233" y="170" width="2" height="1" fill="#8A94A8"/><rect x="221" y="166" width="11" height="11" fill="#FFFFFF"/><rect x="221" y="166" width="1" height="11" fill="#A9B3C6"/><rect x="221" y="166" width="11" height="3" fill="#3E8E8E"/><rect x="222" y="167" width="9" height="1" fill="#66AAAA"/><rect x="231" y="166" width="1.2" height="11" fill="#2E405E"/><rect x="221" y="176" width="11.2" height="1.2" fill="#2E405E"/><rect x="223" y="170" width="2" height="1" fill="#8A94A8"/><rect x="223" y="172" width="2" height="1" fill="#8A94A8"/><rect x="223" y="174" width="2" height="1" fill="#8A94A8"/><rect x="228" y="170" width="2" height="1" fill="#8A94A8"/><rect x="228" y="174" width="2" height="1" fill="#8A94A8"/><path d="M926.3 166 L934 173.2 M934 166 L926.3 173.2" stroke="#333" stroke-width="1.2"/><g transform="translate(0,0)"><path d="M281.3 245.2 Q281.3 244 282.5 244 H286.8 Q288 244 288 245.2 V248 Q288 249.3 286.3 249.9 V250.6 H287.3 V251.6 H286.3 V252.4 H287.3 V253.6 L285.8 255 H284.2 Q283.1 255 283.1 254 V249.9 Q281.3 249.3 281.3 248Z" fill="#EEDC58" stroke="#7A5A10" stroke-width="0.8"/><circle cx="284.6" cy="246.3" r="0.9" fill="#7A4A20"/><rect x="284.2" y="250" width="1" height="4.5" fill="#FFF6B0"/></g><g transform="translate(192,18)"><path d="M281.3 245.2 Q281.3 244 282.5 244 H286.8 Q288 244 288 245.2 V248 Q288 249.3 286.3 249.9 V250.6 H287.3 V251.6 H286.3 V252.4 H287.3 V253.6 L285.8 255 H284.2 Q283.1 255 283.1 254 V249.9 Q281.3 249.3 281.3 248Z" fill="#EEDC58" stroke="#7A5A10" stroke-width="0.8"/><circle cx="284.6" cy="246.3" r="0.9" fill="#7A4A20"/><rect x="284.2" y="250" width="1" height="4.5" fill="#FFF6B0"/></g><rect x="413" y="286" width="15.5" height="3" fill="#000"/><rect x="432" y="268" width="15.7" height="3" fill="#000"/><path d="M447.7 268 L449 269.5 L447.7 271Z" fill="#000"/><path d="M428 287.5 L433 269.5" stroke="#000" stroke-width="1.3"/><g fill="none" stroke="#000" stroke-width="1.6"><ellipse cx="418.2" cy="280.4" rx="2.6" ry="1.7"/><ellipse cx="424.4" cy="280.4" rx="2.6" ry="1.7"/></g><path d="M436 261 L438.3 259.2 V264.6 M436.2 264.8 H440.2" fill="none" stroke="#000" stroke-width="1.3"/><g fill="none" stroke="#666" stroke-width="1"><rect x="839.5" y="668.5" width="13" height="12"/><line x1="840" y1="670.8" x2="852" y2="670.8"/><line x1="841.8" y1="671" x2="841.8" y2="680"/><line x1="843.5" y1="671" x2="843.5" y2="680"/></g><g fill="#666"><rect x="845.2" y="674" width="2.8" height="1"/><rect x="849.2" y="674" width="2.5" height="1"/><rect x="845.2" y="677" width="2.8" height="1"/><rect x="849.2" y="677" width="2.5" height="1"/></g><text x="883.9" y="676.6" font-family="Liberation Sans" font-size="8" text-anchor="middle" fill="#555" letter-spacing="-0.3">SQL</text><path d="M915.6 668.3 V675.5 H920.5 Z M916.8 672 V674.4 H918.8Z" fill="#666" fill-rule="evenodd"/><path d="M920.5 674.4 L921.6 673.4 M922.4 672.7 L926.6 668.9 M927.2 668.4 L928 667.7" stroke="#666" stroke-width="1.7"/><rect x="916.5" y="677.3" width="12.2" height="3" fill="none" stroke="#666" stroke-width="1"/><g fill="#666"><rect x="918.8" y="677.5" width="0.9" height="1"/><rect x="921.6" y="677.5" width="0.9" height="1"/><rect x="924.4" y="677.5" width="0.9" height="1"/></g></svg>
<div class="t" style="left:151.24px;top:9.70px;font-size:13px;line-height:13px;color:#FFFFFF;font-weight:normal;font-style:normal;letter-spacing:-0.647px;-webkit-text-stroke:0;">Earth : Database- C:\Users\Fred\Docume...</div>
<div class="t" style="left:399.52px;top:11.20px;font-size:11.5px;line-height:11.5px;color:#EBC9CA;font-weight:normal;font-style:normal;letter-spacing:-0.209px;-webkit-text-stroke:0;">Query Tools</div>
<div class="t" style="left:710.76px;top:9.00px;font-size:13px;line-height:13px;color:#FFFFFF;font-weight:normal;font-style:normal;letter-spacing:-0.402px;-webkit-text-stroke:0;">Sign in</div>
<div class="t" style="left:777.28px;top:9.00px;font-size:13px;line-height:13px;color:#FFFFFF;font-weight:normal;font-style:normal;letter-spacing:0.000px;-webkit-text-stroke:0;">?</div>
<div class="t" style="left:20.00px;top:43.40px;font-size:13px;line-height:13px;color:#FFFFFF;font-weight:normal;font-style:normal;letter-spacing:-0.446px;-webkit-text-stroke:0;">File</div>
<div class="t" style="left:74.24px;top:43.40px;font-size:13px;line-height:13px;color:#FFFFFF;font-weight:normal;font-style:normal;letter-spacing:-0.109px;-webkit-text-stroke:0;">Home</div>
<div class="t" style="left:136.76px;top:43.40px;font-size:13px;line-height:13px;color:#FFFFFF;font-weight:normal;font-style:normal;letter-spacing:-0.988px;-webkit-text-stroke:0;">Create</div>
<div class="t" style="left:199.52px;top:43.40px;font-size:13px;line-height:13px;color:#FFFFFF;font-weight:normal;font-style:normal;letter-spacing:-0.876px;-webkit-text-stroke:0;">External Data</div>
<div class="t" style="left:296.00px;top:43.40px;font-size:13px;line-height:13px;color:#FFFFFF;font-weight:normal;font-style:normal;letter-spacing:-0.675px;-webkit-text-stroke:0;">Database Tools</div>
<div class="t" style="left:410.50px;top:42.80px;font-size:13px;line-height:13px;color:#A4373A;font-weight:normal;font-style:normal;letter-spacing:-0.728px;">Design</div>
<div class="t" style="left:497.82px;top:43.40px;font-size:13px;line-height:13px;color:#F0D3D4;font-weight:normal;font-style:normal;letter-spacing:-0.391px;-webkit-text-stroke:0;">Tell me what you want to do</div>
<div class="t" style="left:11.80px;top:108.00px;font-size:12px;line-height:12px;color:#444444;font-weight:normal;font-style:normal;letter-spacing:-0.465px;">View</div>
<div class="t" style="left:55.78px;top:108.00px;font-size:12px;line-height:12px;color:#444444;font-weight:normal;font-style:normal;letter-spacing:-0.210px;">Run</div>
<div class="t" style="left:145.00px;top:107.70px;font-size:12px;line-height:12px;color:#444444;font-weight:normal;font-style:normal;letter-spacing:0.075px;">Make</div>
<div class="t" style="left:147.34px;top:123.90px;font-size:12px;line-height:12px;color:#444444;font-weight:normal;font-style:normal;letter-spacing:-0.357px;">Table</div>
<div class="t" style="left:182.28px;top:107.70px;font-size:12px;line-height:12px;color:#444444;font-weight:normal;font-style:normal;letter-spacing:0.341px;">Append</div>
<div class="t" style="left:250.02px;top:73.80px;font-size:12px;line-height:12px;color:#444444;font-weight:normal;font-style:normal;letter-spacing:-0.022px;">Update</div>
<div class="t" style="left:250.02px;top:96.70px;font-size:12px;line-height:12px;color:#444444;font-weight:normal;font-style:normal;letter-spacing:-0.349px;">Crosstab</div>
<div class="t" style="left:250.02px;top:119.70px;font-size:12px;line-height:12px;color:#444444;font-weight:normal;font-style:normal;letter-spacing:-0.222px;">Delete</div>
<div class="t" style="left:324.50px;top:73.80px;font-size:12px;line-height:12px;color:#444444;font-weight:normal;font-style:normal;letter-spacing:0.176px;">Union</div>
<div class="t" style="left:324.50px;top:96.70px;font-size:12px;line-height:12px;color:#444444;font-weight:normal;font-style:normal;letter-spacing:-0.118px;">Pass-Through</div>
<div class="t" style="left:324.50px;top:119.70px;font-size:12px;line-height:12px;color:#444444;font-weight:normal;font-style:normal;letter-spacing:0.067px;">Data Definition</div>
<div class="t" style="left:425.78px;top:107.50px;font-size:12px;line-height:12px;color:#444444;font-weight:normal;font-style:normal;letter-spacing:-0.542px;">Show</div>
<div class="t" style="left:428.30px;top:123.30px;font-size:12px;line-height:12px;color:#444444;font-weight:normal;font-style:normal;letter-spacing:-0.557px;">Table</div>
<div class="t" style="left:492.78px;top:73.70px;font-size:12px;line-height:12px;color:#444444;font-weight:normal;font-style:normal;letter-spacing:-0.335px;">Insert Rows</div>
<div class="t" style="left:492.78px;top:96.50px;font-size:12px;line-height:12px;color:#444444;font-weight:normal;font-style:normal;letter-spacing:-0.396px;">Delete Rows</div>
<div class="t" style="left:492.78px;top:119.50px;font-size:12px;line-height:12px;color:#444444;font-weight:normal;font-style:normal;letter-spacing:-0.059px;">Builder</div>
<div class="t" style="left:594.52px;top:73.60px;font-size:12px;line-height:12px;color:#444444;font-weight:normal;font-style:normal;letter-spacing:-0.051px;">Insert Columns</div>
<div class="t" style="left:594.52px;top:96.40px;font-size:12px;line-height:12px;color:#444444;font-weight:normal;font-style:normal;letter-spacing:-0.084px;">Delete Columns</div>
<div class="t" style="left:594.52px;top:119.60px;font-size:12px;line-height:12px;color:#444444;font-weight:normal;font-style:normal;letter-spacing:-0.173px;">Return:</div>
<div class="t" style="left:719.80px;top:107.60px;font-size:12px;line-height:12px;color:#444444;font-weight:normal;font-style:normal;letter-spacing:-0.275px;">Totals</div>
<div class="t" style="left:777.24px;top:73.70px;font-size:12px;line-height:12px;color:#444444;font-weight:normal;font-style:normal;letter-spacing:-0.298px;">Parameters</div>
<div class="t" style="left:777.24px;top:96.60px;font-size:12px;line-height:12px;color:#444444;font-weight:normal;font-style:normal;letter-spacing:-0.231px;">Property Sheet</div>
<div class="t" style="left:26.50px;top:142.80px;font-size:12px;line-height:12px;color:#666666;font-weight:normal;font-style:normal;letter-spacing:-0.530px;">Results</div>
<div class="t" style="left:225.54px;top:142.50px;font-size:12px;line-height:12px;color:#666666;font-weight:normal;font-style:normal;letter-spacing:-0.753px;">Query Type</div>
<div class="t" style="left:530.52px;top:142.00px;font-size:12px;line-height:12px;color:#666666;font-weight:normal;font-style:normal;letter-spacing:-0.405px;">Query Setup</div>
<div class="t" style="left:759.04px;top:142.50px;font-size:12px;line-height:12px;color:#666666;font-weight:normal;font-style:normal;letter-spacing:-0.158px;">Show/Hide</div>
<div class="t" style="left:101.78px;top:107.70px;font-size:12px;line-height:12px;color:#444444;font-weight:normal;font-style:normal;letter-spacing:-0.627px;">Select</div>
<div class="t" style="left:778.54px;top:119.50px;font-size:12px;line-height:12px;color:#444444;font-weight:normal;font-style:normal;letter-spacing:-0.280px;">Table Names</div>
<div class="t" style="left:641.58px;top:119.60px;font-size:12px;line-height:12px;color:#222222;font-weight:normal;font-style:normal;letter-spacing:0.234px;">All</div>
<div class="t" style="left:9.58px;top:166.60px;font-size:20px;line-height:20px;color:#A4373A;font-weight:normal;font-style:normal;letter-spacing:0.114px;-webkit-text-stroke:0;">All Access Obje...</div>
<div class="t" style="left:7.52px;top:196.40px;font-size:11px;line-height:11px;color:#1E1E1E;font-weight:normal;font-style:italic;letter-spacing:-0.735px;">Search...</div>
<div class="t" style="left:13.80px;top:216.50px;font-size:12px;line-height:12px;color:#585858;font-weight:bold;font-style:normal;letter-spacing:0.587px;">Tables</div>
<div class="t" style="left:43.30px;top:238.20px;font-size:12px;line-height:12px;color:#444444;font-weight:normal;font-style:normal;letter-spacing:-0.816px;">City</div>
<div class="t" style="left:43.30px;top:261.70px;font-size:12px;line-height:12px;color:#444444;font-weight:normal;font-style:normal;letter-spacing:-0.293px;">Country</div>
<div class="t" style="left:42.50px;top:285.80px;font-size:12px;line-height:12px;color:#444444;font-weight:normal;font-style:normal;letter-spacing:-0.478px;">Province</div>
<div class="t" style="left:6.24px;top:668.70px;font-size:12px;line-height:12px;color:#444444;font-weight:normal;font-style:normal;letter-spacing:-0.782px;">Ready</div>
<div class="t" style="left:245.06px;top:165.10px;font-size:11px;line-height:11px;color:#A4373A;font-weight:bold;font-style:normal;letter-spacing:-0.335px;">Query1</div>
<div class="t" style="left:327.52px;top:204.40px;font-size:12px;line-height:12px;color:#444444;font-weight:normal;font-style:normal;letter-spacing:0.117px;">City</div>
<div class="t" style="left:295.54px;top:229.00px;font-size:11px;line-height:11px;color:#000000;font-weight:normal;font-style:normal;letter-spacing:0.000px;">*</div>
<div class="t" style="left:295.56px;top:246.20px;font-size:11px;line-height:11px;color:#000000;font-weight:normal;font-style:normal;letter-spacing:0.027px;">CityId</div>
<div class="t" style="left:295.56px;top:264.10px;font-size:11px;line-height:11px;color:#000000;font-weight:normal;font-style:normal;letter-spacing:-0.148px;">CityName</div>
<div class="t" style="left:295.56px;top:282.00px;font-size:11px;line-height:11px;color:#000000;font-weight:normal;font-style:normal;letter-spacing:0.247px;">CountryCode</div>
<div class="t" style="left:294.76px;top:299.90px;font-size:11px;line-height:11px;color:#000000;font-weight:normal;font-style:normal;letter-spacing:0.622px;">Population</div>
<div class="t" style="left:294.76px;top:317.90px;font-size:11px;line-height:11px;color:#000000;font-weight:normal;font-style:normal;letter-spacing:0.628px;">Longitude</div>
<div class="t" style="left:509.54px;top:204.40px;font-size:12px;line-height:12px;color:#444444;font-weight:normal;font-style:normal;letter-spacing:-0.040px;">Country</div>
<div class="t" style="left:487.58px;top:229.00px;font-size:11px;line-height:11px;color:#000000;font-weight:normal;font-style:normal;letter-spacing:0.000px;">*</div>
<div class="t" style="left:486.80px;top:246.20px;font-size:11px;line-height:11px;color:#000000;font-weight:normal;font-style:normal;letter-spacing:0.242px;">CountryName</div>
<div class="t" style="left:486.80px;top:264.10px;font-size:11px;line-height:11px;color:#000000;font-weight:normal;font-style:normal;letter-spacing:0.323px;">CountryCode</div>
<div class="t" style="left:486.80px;top:282.00px;font-size:11px;line-height:11px;color:#000000;font-weight:normal;font-style:normal;letter-spacing:0.385px;">Capital</div>
<div class="t" style="left:486.00px;top:299.90px;font-size:11px;line-height:11px;color:#000000;font-weight:normal;font-style:normal;letter-spacing:0.181px;">Province</div>
<div class="t" style="left:486.80px;top:317.90px;font-size:11px;line-height:11px;color:#000000;font-weight:normal;font-style:normal;letter-spacing:-0.170px;">Area</div>
<div class="t" style="left:252.04px;top:492.00px;font-size:11px;line-height:11px;color:#111111;font-weight:normal;font-style:normal;letter-spacing:0.000px;">Field:</div>
<div class="t" style="left:249.54px;top:506.40px;font-size:11px;line-height:11px;color:#111111;font-weight:normal;font-style:normal;letter-spacing:0.000px;">Table:</div>
<div class="t" style="left:255.27px;top:521.40px;font-size:11px;line-height:11px;color:#111111;font-weight:normal;font-style:normal;letter-spacing:0.000px;">Sort:</div>
<div class="t" style="left:248.16px;top:536.50px;font-size:11px;line-height:11px;color:#111111;font-weight:normal;font-style:normal;letter-spacing:0.000px;">Show:</div>
<div class="t" style="left:240.02px;top:551.20px;font-size:11px;line-height:11px;color:#111111;font-weight:normal;font-style:normal;letter-spacing:0.000px;">Criteria:</div>
<div class="t" style="left:265.91px;top:566.30px;font-size:11px;line-height:11px;color:#111111;font-weight:normal;font-style:normal;letter-spacing:0.000px;">or:</div>
<div class="t" style="left:289.78px;top:493.20px;font-size:11px;line-height:11px;color:#000000;font-weight:normal;font-style:normal;letter-spacing:-0.185px;">CityName</div>
<div class="t" style="left:289.78px;top:508.10px;font-size:11px;line-height:11px;color:#000000;font-weight:normal;font-style:normal;letter-spacing:-0.146px;">City</div>
<div class="t" style="left:404.76px;top:493.20px;font-size:11px;line-height:11px;color:#000000;font-weight:normal;font-style:normal;letter-spacing:0.596px;">Population</div>
<div class="t" style="left:405.56px;top:508.10px;font-size:11px;line-height:11px;color:#000000;font-weight:normal;font-style:normal;letter-spacing:-0.146px;">City</div>
<div class="t" style="left:404.76px;top:522.80px;font-size:11px;line-height:11px;color:#000000;font-weight:normal;font-style:normal;letter-spacing:0.357px;">Descending</div>
<div class="t" style="left:406.80px;top:553.70px;font-size:10px;line-height:10px;color:#000000;font-weight:normal;font-style:normal;letter-spacing:0.000px;">&gt;</div>
<div class="t" style="left:413.46px;top:552.50px;font-size:11px;line-height:11px;color:#000000;font-weight:normal;font-style:normal;letter-spacing:0.291px;">[Population greater than how many?]</div>
<div class="t" style="left:619.06px;top:493.20px;font-size:11px;line-height:11px;color:#000000;font-weight:normal;font-style:normal;letter-spacing:0.187px;">CountryName</div>
<div class="t" style="left:619.06px;top:508.10px;font-size:11px;line-height:11px;color:#000000;font-weight:normal;font-style:normal;letter-spacing:0.330px;">Country</div>
<svg class="r" style="left:0;top:0" width="942" height="687"><path d="M376.2 560.7 A131.3 29.7 0 1 0 638.8 560.7 A131.3 29.7 0 1 0 376.2 560.7Z M385.6 560.75 A121.65 21.25 0 1 0 628.9 560.75 A121.65 21.25 0 1 0 385.6 560.75Z" fill="#FF9900" fill-rule="evenodd"/></svg>
</body></html>
